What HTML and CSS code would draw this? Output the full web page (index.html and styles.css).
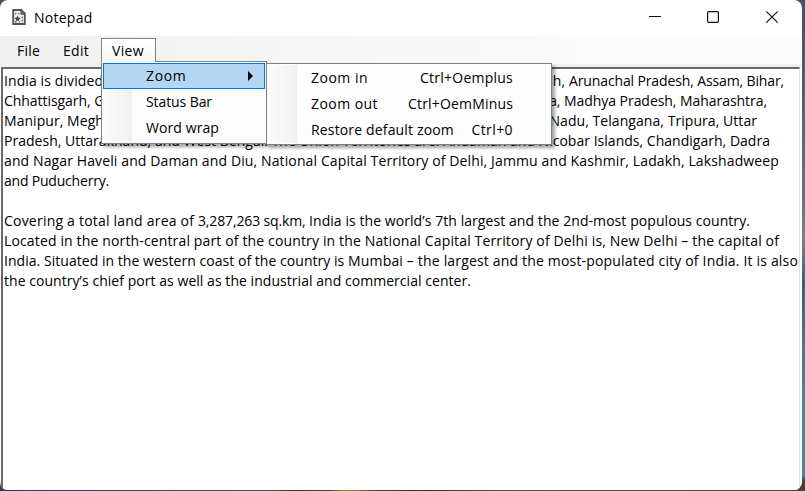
FILE: index.html
```html
<!DOCTYPE html>
<html lang="en">
<head>
<meta charset="utf-8">
<title>Notepad</title>
<link rel="stylesheet" href="styles.css">
</head>
<body>
<div class="window">
  <header class="titlebar">
    <svg class="app-icon" width="14" height="16" viewBox="0 0 14 16">
      <path d="M1.2 1H9.2L12.8 4.5V15H1.2Z" fill="#f0f0f0" stroke="#555" stroke-width="1.9"/>
      <path d="M9 1V5H13" fill="#777" stroke="#555" stroke-width="1.3"/>
      <path d="M3 4.5H4.5M6 4.5H7.5M9.5 8.5H11M9.5 11.5H11M3 13H4.5M7 13H8" stroke="#777" stroke-width="1.3"/>
      <path d="M5.5 6.5L6.4 8.6L8.6 9L7 10.4L7.4 12.4L5.5 11.3L3.6 12.4L4 10.4L2.4 9L4.6 8.6Z" fill="#444"/>
    </svg>
    <h1 class="title"><span data-w="58.5">Notepad</span></h1>
    <svg class="controls" width="132" height="34" viewBox="0 0 132 34" fill="none" stroke="#111" stroke-width="1.2">
      <path d="M1 16.5H13" stroke-width="1"/>
      <rect x="59.6" y="11.6" width="10.8" height="10.8" rx="1.2"/>
      <path d="M118.3 11.3L129.7 22.7M129.7 11.3L118.3 22.7"/>
    </svg>
  </header>
  <nav class="menubar">
    <div class="menu-item file"><span data-w="23">File</span></div>
    <div class="menu-item edit"><span data-w="26">Edit</span></div>
    <div class="menu-item view"><span data-w="32">View</span></div>
  </nav>
  <main class="editor">
    <p><span data-w="565">India is divided into 28 states and 8 Union territories. The states are Andhra Pradesh, </span><span data-w="215">Arunachal Pradesh, Assam, Bihar,</span></p>
    <p><span data-w="763">Chhattisgarh, Goa, Gujarat, Haryana, Himachal Pradesh, Jharkhand, Karnataka, Kerala, Madhya Pradesh, Maharashtra,</span></p>
    <p><span data-w="753">Manipur, Meghalaya, Mizoram, Nagaland, Odisha, Punjab, Rajasthan, Sikkim, Tamil Nadu, Telangana, Tripura, Uttar</span></p>
    <p><span data-w="766">Pradesh, Uttarakhand, and West Bengal. The Union Territories are: Andaman and Nicobar Islands, Chandigarh, Dadra</span></p>
    <p><span data-w="257">and Nagar Haveli and Daman and Diu, </span><span data-w="518">National Capital Territory of Delhi, Jammu and Kashmir, Ladakh, Lakshadweep</span></p>
    <p><span data-w="105">and Puducherry.</span></p>
    <p></p>
    <p><span data-w="194">Covering a total land area of </span><span data-w="111">3,287,263 sq.km, </span><span data-w="441">India is the world’s 7th largest and the 2nd-most populous country.</span></p>
    <p><span data-w="775">Located in the north-central part of the country in the National Capital Territory of Delhi is, New Delhi – the capital of</span></p>
    <p><span data-w="344">India. Situated in the western coast of the country is </span><span data-w="450">Mumbai – the largest and the most-populated city of India. It is also</span></p>
    <p><span data-w="467">the country’s chief port as well as the industrial and commercial center.</span></p>
  </main>
</div>
<div class="menu view-menu">
  <div class="option selected"><span data-w="40.5">Zoom</span><i class="arrow"></i></div>
  <div class="option"><span data-w="66">Status Bar</span></div>
  <div class="option"><span data-w="73">Word wrap</span></div>
</div>
<div class="menu zoom-menu">
  <div class="option"><span data-w="57">Zoom in</span><span data-w="93">Ctrl+Oemplus</span></div>
  <div class="option"><span data-w="67">Zoom out</span><span data-w="105">Ctrl+OemMinus</span></div>
  <div class="option"><span data-w="143">Restore default zoom</span><span data-w="41.5">Ctrl+0</span></div>
</div>
<div class="menu-joint"></div>
<script src="fit.js"></script>
</body>
</html>
```
FILE: styles.css
```css
* { box-sizing: border-box; }
html, body { margin: 0; height: 100%; }
body {
  position: relative;
  overflow: hidden;
  padding: 0 3px 1px 0;
  font: 14px/20px "Open Sans", sans-serif;
  color: #000;
  background:
    linear-gradient(90deg, #1b3a5c, #34566a 270px, #2e3038 290px, #5e352c 330px, #8f8a1c 342px, #98761c 358px, #543430 375px, #302d34 430px, #57504a 500px, #4a4542) 0 100% / 100% 1px no-repeat,
    linear-gradient(#46506a, #5a6078 110px, #66708a 200px, #807f88 240px, #2f6488 280px, #566d8c 340px, #4386a3 400px, #4386a3 475px, #453e3a 482px);
}
span { white-space: pre; }
.window {
  display: flex;
  flex-direction: column;
  height: 490px;
  border-radius: 8px;
  overflow: hidden;
  background: #fff;
}
.titlebar { display: flex; align-items: center; height: 36px; padding: 0 22px 2px 12px; flex: none; }
.app-icon { margin-right: 8px; }
.title { margin: 2px 0 0; font-size: 14px; font-weight: 400; }
.controls { margin-left: auto; }
.menubar {
  display: flex;
  flex: none;
  height: 31px;
  padding-top: 2px;
  background: linear-gradient(90deg, #f0f0f0, #fcfcfc 80%);
  border-bottom: 3px solid #f0f0f0;
}
.menu-item { height: 25px; line-height: 25px; }
.file { padding-left: 17px; width: 63px; }
.edit { width: 38px; }
.view { width: 55px; padding-left: 10px; border: 1px solid #808080; border-bottom: 0; background: linear-gradient(#fff, #f6f6f6); line-height: 24px; }
.editor {
  flex: 1;
  margin: 0 2px 0 1px;
  padding: 2px 0 0 1px;
  border: solid #e3e3e3;
  border-width: 2px 1px 0 2px;
  border-top-color: #696969;
  border-left-color: #696969;
  overflow: hidden;
  background: #fff;
}
.editor p { margin: 0; height: 20px; white-space: nowrap; }
.menu {
  position: absolute;
  padding: 2px 1px;
  border: 1px solid #808080;
  box-shadow: 3px 3px 3px rgba(0, 0, 0, .35);
}
.view-menu { left: 101px; top: 61px; width: 166px; height: 83px; padding-top: 1px; background: linear-gradient(90deg, #fcfcfc, #f0f0f0) 2px 0 / 28px 79px no-repeat, #fdfdfd; }
.zoom-menu { left: 266px; top: 63px; width: 286px; height: 82px; padding-top: 1px; background: linear-gradient(90deg, #fcfcfc, #f0f0f0) 1px 1px / 29px 78px no-repeat, #fdfdfd; }
.option { display: flex; align-items: center; justify-content: space-between; height: 26px; padding: 0 12px 0 43px; }
.zoom-menu .option { padding: 0 37px 0 43px; }
.selected { border: 1px solid #0078d7; background: #b3d7f3; padding-left: 42px; padding-right: 11px; }
.arrow { border: solid transparent; border-width: 5px 0 5px 5px; border-left-color: #000; }
.menu-joint { position: absolute; left: 102px; top: 61px; width: 53px; height: 1px; background: #f8f8f8; }
```
FILE: fit.js
```js
// Spread each text run over its nominal width.
document.querySelectorAll("[data-w]").forEach((el) => {
  const width = el.getBoundingClientRect().width;
  const spacing = (Number(el.dataset.w) - width) / el.textContent.length;
  el.style.letterSpacing = spacing + "px";
});
```
